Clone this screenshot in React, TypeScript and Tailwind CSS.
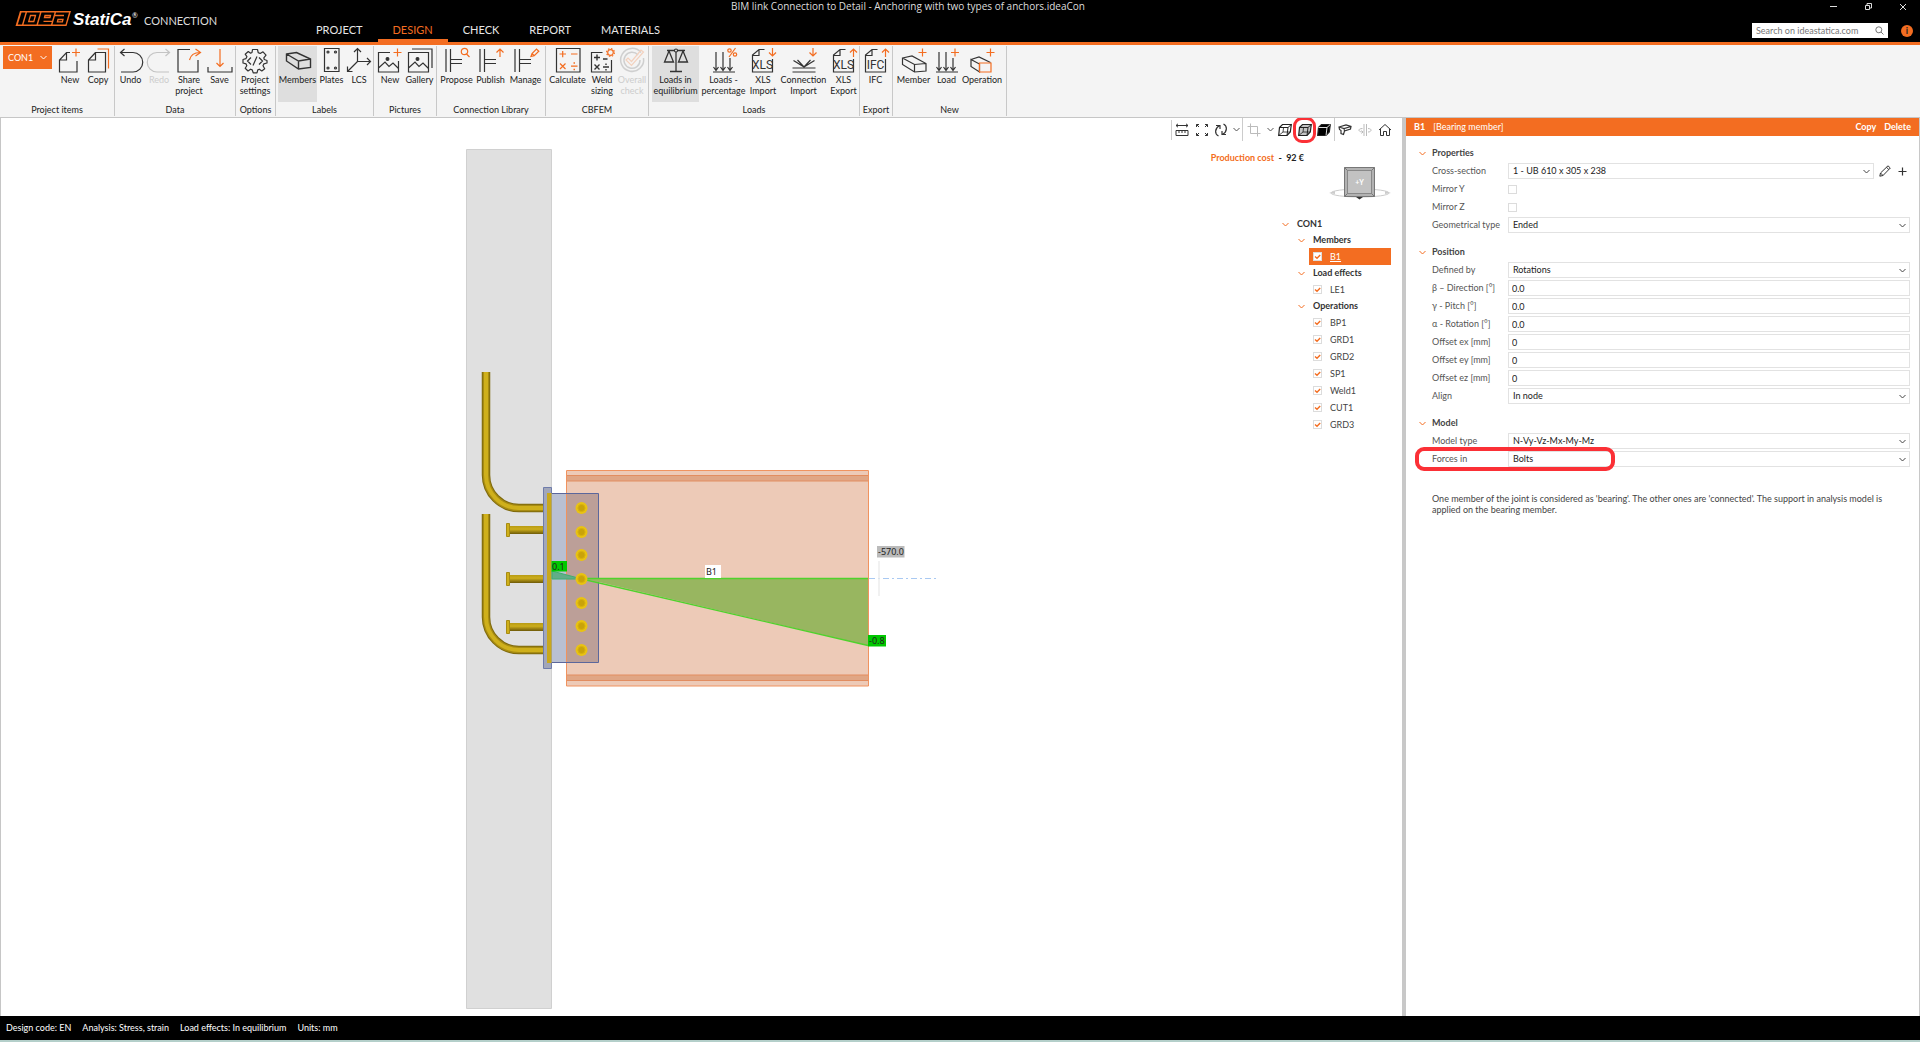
import type { ReactNode } from "react";

const ORANGE = "#f36d21";

type IconProps = { children: ReactNode; muted?: boolean };

const RibbonIcon = ({ children, muted }: IconProps) => (
  <svg
    width="26"
    height="26"
    viewBox="0 0 26 26"
    fill="none"
    stroke="#333"
    strokeWidth="1.2"
    className={muted ? "overflow-visible opacity-25" : "overflow-visible"}
    aria-hidden="true"
  >
    {children}
  </svg>
);

const Plus = ({ x, y }: { x: number; y: number }) => (
  <path d={`M${x} ${y - 4}v8M${x - 4} ${y}h8`} stroke={ORANGE} />
);

const SheetIcon = ({ text, up }: { text: string; up?: boolean }) => (
  <RibbonIcon>
    <path d="M14.5 1.5H9L2.5 7V24H22.5V11M2.5 7.5H9V1.5" />
    <text
      x="12.5"
      y="20.5"
      fontSize="12"
      textAnchor="middle"
      fill="#333"
      stroke="none"
      className="font-['Roboto',sans-serif]"
    >
      {text}
    </text>
    {up ? (
      <path d="M22.5 9V1M19 4.5L22.5 1L26 4.5" stroke={ORANGE} />
    ) : (
      <path d="M22.5 0V8M19 4.5L22.5 8L26 4.5" stroke={ORANGE} />
    )}
  </RibbonIcon>
);

const Joint = ({ children }: { children: ReactNode }) => (
  <RibbonIcon>
    <path d="M2 1V24M6.5 1V24M6.5 11.5H18M6.5 15.5H18" />
    {children}
  </RibbonIcon>
);

const LoadArrows = () => (
  <path d="M2 24H24M5 4V22M2.5 19L5 22.5L7.5 19M12 4V22M9.5 19L12 22.5L14.5 19M19 10V22M16.5 19L19 22.5L21.5 19" />
);

const icons: Record<string, ReactNode> = {
  new: (
    <RibbonIcon>
      <path d="M13 4.5H9.5L2.5 12V24H20V13M2.5 12H9.5V4.5" />
      <Plus x={19} y={4.5} />
    </RibbonIcon>
  ),
  copy: (
    <RibbonIcon>
      <path d="M10.5 4.5L3.5 12V24H20.5V4.5ZM3.5 12H10.5V4.5" />
      <path d="M12.5 1H23.5V20.5" stroke={ORANGE} />
    </RibbonIcon>
  ),
  undo: (
    <RibbonIcon>
      <path d="M2.5 4.5H15A9.7 9.7 0 0 1 15 24H3M6.5 1L2.5 4.5L6.5 8" />
    </RibbonIcon>
  ),
  redo: (
    <RibbonIcon muted>
      <path d="M23.5 4.5H11A9.7 9.7 0 0 0 11 24H23M19.5 1L23.5 4.5L19.5 8" />
    </RibbonIcon>
  ),
  share: (
    <RibbonIcon>
      <path d="M14 1.5H2V24H22V12" />
      <path d="M13.5 12C14.5 7.5 18 4.5 24 4.5M19.5 1L24.5 4.5L19.5 8" stroke={ORANGE} />
    </RibbonIcon>
  ),
  save: (
    <RibbonIcon>
      <path d="M1 19V24H25V19" />
      <path d="M13 1V18.5M9.5 15L13 18.5L16.5 15" stroke={ORANGE} />
    </RibbonIcon>
  ),
  settings: (
    <RibbonIcon>
      <path
        strokeLinejoin="round"
        d="M10.5 1.5H15.5L16.2 4.6L18.2 5.5L21 3.8L24 7.2L21.8 9.8L22.3 11.5L25 12.5V15L21.9 15.8L21 17.8L22.7 20.7L19.8 23L17.3 21.2L15.8 21.9L15 24.8H11.2L10.2 21.9L8.6 21.2L6 23L3.2 20.3L4.8 17.8L4 15.8L1 15V11.5L4 10.6L4.9 8.7L3.2 6.2L6.3 3.5L8.6 5.2L10 4.5Z"
      />
      <path d="M9 9.5L5.5 13L9 16.5M17 9.5L20.5 13L17 16.5M15 8.5L11 17.5" />
    </RibbonIcon>
  ),
  members: (
    <RibbonIcon>
      <path
        d="M1.5 6L11.5 4.5L25.5 11V19.5L13.5 21L1.5 13ZM1.5 6L13.5 13L25.5 11M13.5 13V21"
        strokeWidth="1.4"
      />
    </RibbonIcon>
  ),
  plates: (
    <RibbonIcon>
      <path d="M5.5 .5H20V23.5H5.5Z" />
      <circle cx="9" cy="4" r="1" />
      <circle cx="16.5" cy="4" r="1" />
      <circle cx="9" cy="20" r="1" />
      <circle cx="16.5" cy="20" r="1" />
    </RibbonIcon>
  ),
  lcs: (
    <RibbonIcon>
      <path d="M11.5 13.5V.5M8 4L11.5 .5L15 4M11.5 13.5H24.5M21 10L24.5 13.5L21 17M11.5 13.5L1.5 23.5M1.5 18.5V23.5H6.5" />
    </RibbonIcon>
  ),
  picture: (
    <RibbonIcon>
      <path d="M13 4.5H1.5V24H21.5V13M1.5 20L8 14L12 18.5L16 15L21.5 20.5" />
      <circle cx="10.5" cy="11" r="1.4" fill="#333" />
      <Plus x={20.5} y={4.5} />
    </RibbonIcon>
  ),
  gallery: (
    <RibbonIcon>
      <path d="M1.5 4.5H21.5V24H1.5ZM1.5 20L8 14L12 18.5L16 15L21.5 20.5M5 1H25V20" />
      <circle cx="10.5" cy="11" r="1.4" fill="#333" />
    </RibbonIcon>
  ),
  propose: (
    <Joint>
      <path d="M22.5 6L25.5 9" stroke={ORANGE} />
      <circle cx="20.5" cy="3.5" r="3.2" stroke={ORANGE} />
    </Joint>
  ),
  publish: (
    <Joint>
      <path d="M22 9V1M18.5 4.5L22 1L25.5 4.5" stroke={ORANGE} />
    </Joint>
  ),
  manage: (
    <Joint>
      <path d="M18 8.5L19 5.5L23.5 1L25.8 3.2L21.2 7.7ZM19 5.5L21.2 7.7" stroke={ORANGE} />
    </Joint>
  ),
  calculate: (
    <RibbonIcon>
      <path d="M1.5 .5H25V24H1.5Z" />
      <path
        d="M4.5 6H11M7.7 3V9.2M16 6H22.5M5 15.5L10.5 21M10.5 15.5L5 21M16 18.2H22.5"
        stroke={ORANGE}
      />
      <path d="M18.5 15H20M18.5 21.5H20" stroke={ORANGE} strokeWidth="1.5" />
    </RibbonIcon>
  ),
  weld: (
    <RibbonIcon>
      <path d="M13.5 4.5H2.5V24H22.5V12" />
      <path
        d="M5 9.5H11M8 6.5V12.5M14 11H18.5M5.5 16.5L10.5 21.5M10.5 16.5L5.5 21.5M14 19H20M17 15.5V17M17 21V22.5"
        strokeWidth="1.4"
      />
      <circle cx="21.5" cy="4.5" r="2.8" stroke={ORANGE} />
      <circle cx="21.5" cy="4.5" r="3.9" stroke={ORANGE} strokeDasharray="1.5 1.56" />
    </RibbonIcon>
  ),
  overall: (
    <RibbonIcon muted>
      <path d="M22 4.5A11.5 11.5 0 1 0 24.5 10M19 7A8 8 0 1 0 21 12" stroke="#666" strokeWidth="1.5" />
      <path d="M7 12L9 10L12.5 13.5L22 2L24.5 4L12.5 17.5Z" stroke={ORANGE} />
    </RibbonIcon>
  ),
  scales: (
    <RibbonIcon>
      <path d="M4 2.5H22M13 1V23.5M7 23.5H19M6 3L1.5 14H10.5ZM20 3L15.5 14H24.5Z" strokeWidth="1.3" />
      <circle cx="13" cy="2.5" r="1.5" fill="#f4f4f4" />
    </RibbonIcon>
  ),
  percentage: (
    <RibbonIcon>
      <LoadArrows />
      <circle cx="18.5" cy="2.5" r="1.7" stroke={ORANGE} />
      <circle cx="24" cy="6.5" r="1.7" stroke={ORANGE} />
      <path d="M24.5 0L18 9" stroke={ORANGE} />
    </RibbonIcon>
  ),
  xlsImport: <SheetIcon text="XLS" />,
  xlsExport: <SheetIcon text="XLS" up />,
  ifc: <SheetIcon text="IFC" up />,
  connection: (
    <RibbonIcon>
      <path d="M1.5 20H24.5M1.5 24H24.5M13 19L2.5 12.5M13 19L23.5 12.5M13 19L6.5 12M13 19L19.5 12" />
      <path d="M22 0V8M18.5 4.5L22 8L25.5 4.5" stroke={ORANGE} />
    </RibbonIcon>
  ),
  member: (
    <RibbonIcon>
      <path d="M1.5 10L11 8L25 15.5V23L13.5 24L1.5 16.5ZM1.5 10L13.5 16.5L25 15.5M13.5 16.5V24" />
      <Plus x={21.5} y={4.5} />
    </RibbonIcon>
  ),
  load: (
    <RibbonIcon>
      <LoadArrows />
      <Plus x={21} y={4.5} />
    </RibbonIcon>
  ),
  operation: (
    <RibbonIcon>
      <path d="M2 11.5L10 9L21.5 14.5M2 11.5L10.5 16V24L2 18.5Z" />
      <path d="M10.5 15H22V24H10.5Z" stroke={ORANGE} />
      <Plus x={21.5} y={4.5} />
    </RibbonIcon>
  ),
};

type Tool = { icon: string; label: string; width: string; active?: boolean; disabled?: boolean };
type Group = { name: string; width: string; pad?: string; tools: Tool[] };

const groups: Group[] = [
  {
    name: "Project items",
    width: "w-[115px]",
    pad: "pl-[3px]",
    tools: [
      { icon: "new", label: "New", width: "w-[28px]" },
      { icon: "copy", label: "Copy", width: "w-[28px]" },
    ],
  },
  {
    name: "Data",
    width: "w-[121px]",
    pad: "pl-px",
    tools: [
      { icon: "undo", label: "Undo", width: "w-[29px]" },
      { icon: "redo", label: "Redo", width: "w-[28px]", disabled: true },
      { icon: "share", label: "Share project", width: "w-[32px]" },
      { icon: "save", label: "Save", width: "w-[29px]" },
    ],
  },
  {
    name: "Options",
    width: "w-[40px]",
    tools: [{ icon: "settings", label: "Project settings", width: "w-[38px]" }],
  },
  {
    name: "Labels",
    width: "w-[98px]",
    pad: "pl-[2px]",
    tools: [
      { icon: "members", label: "Members", width: "w-[39px]", active: true },
      { icon: "plates", label: "Plates", width: "w-[29px]" },
      { icon: "lcs", label: "LCS", width: "w-[26px]" },
    ],
  },
  {
    name: "Pictures",
    width: "w-[63px]",
    pad: "pl-[2px]",
    tools: [
      { icon: "picture", label: "New", width: "w-[28px]" },
      { icon: "gallery", label: "Gallery", width: "w-[31px]" },
    ],
  },
  {
    name: "Connection Library",
    width: "w-[109px]",
    pad: "pl-[2px]",
    tools: [
      { icon: "propose", label: "Propose", width: "w-[35px]" },
      { icon: "publish", label: "Publish", width: "w-[33px]" },
      { icon: "manage", label: "Manage", width: "w-[37px]" },
    ],
  },
  {
    name: "CBFEM",
    width: "w-[103px]",
    pad: "pl-[2px]",
    tools: [
      { icon: "calculate", label: "Calculate", width: "w-[39px]" },
      { icon: "weld", label: "Weld sizing", width: "w-[30px]" },
      { icon: "overall", label: "Overall check", width: "w-[30px]", disabled: true },
    ],
  },
  {
    name: "Loads",
    width: "w-[211px]",
    pad: "pl-[3px]",
    tools: [
      { icon: "scales", label: "Loads in equilibrium", width: "w-[47px]", active: true },
      { icon: "percentage", label: "Loads - percentage", width: "w-[49px]" },
      { icon: "xlsImport", label: "XLS Import", width: "w-[30px]" },
      { icon: "connection", label: "Connection Import", width: "w-[51px]" },
      { icon: "xlsExport", label: "XLS Export", width: "w-[29px]" },
    ],
  },
  {
    name: "Export",
    width: "w-[33px]",
    tools: [{ icon: "ifc", label: "IFC", width: "w-[31px]" }],
  },
  {
    name: "New",
    width: "w-[114px]",
    pad: "pl-[2px]",
    tools: [
      { icon: "member", label: "Member", width: "w-[37px]" },
      { icon: "load", label: "Load", width: "w-[29px]" },
      { icon: "operation", label: "Operation", width: "w-[42px]" },
    ],
  },
];

const Chevron = ({ className }: { className?: string }) => (
  <svg width="7" height="5" viewBox="0 0 7 5" fill="none" stroke="currentColor" className={className} aria-hidden="true">
    <path d="M.5 1L3.5 4L6.5 1" />
  </svg>
);

const Logo = () => (
  <svg width="126" height="18" viewBox="0 0 126 18" role="img" aria-label="IDEA StatiCa" className="overflow-visible">
    <path d="M5 1H56L51.5 16H.5Z" fill={ORANGE} />
    <path d="M6.5 2.5H10.5L7 14.500H2.800Z" />
    <path d="M12 2.500H25L21.500 14.500H8.500ZM26.500 2.500H39.500L36 14.500H23ZM41 2.500H54L50.500 14.500H37.500Z" />
    <path
      d="M15.500 5.500H20.500L18.800 11.500H13.700ZM30 5.500H35.500L35 7.500H29.500ZM28.500 11.300H37M39.500 5.500H49M43 9.500H48L47.400 11.800H42.400Z"
      fill="none"
      stroke={ORANGE}
      strokeWidth="1.3"
    />
    <text
      x="58"
      y="15"
      fontSize="17"
      fontWeight="bold"
      fontStyle="italic"
      fill="#fff"
      className="font-['Liberation_Sans',sans-serif]"
    >
      StatiCa
    </text>
    <text x="117" y="8" fontSize="7" fill="#fff">
      ®
    </text>
  </svg>
);

const tabs = ["PROJECT", "DESIGN", "CHECK", "REPORT", "MATERIALS"];

const Header = () => (
  <header className="flex h-[45px] shrink-0 border-b-[3px] border-[#f36d21] bg-black text-white">
    <div className="flex w-[292px] items-start pt-[10px] pl-[15px]">
      <Logo />
      <span className="ml-[3px] pt-[4px] text-[11px] leading-[14px] text-[#ddd]">CONNECTION</span>
    </div>
    <div className="flex flex-1 flex-col justify-between">
      <h1 className="text-center font-['Open_Sans','Noto_Sans',sans-serif] text-[10px] leading-[13px] text-[#ddd]">
        BIM link Connection to Detail - Anchoring with two types of anchors.ideaCon
      </h1>
      <nav className="flex pl-[9px]">
        {tabs.map((tab) => (
          <button
            key={tab}
            type="button"
            className={
              tab === "DESIGN"
                ? "h-[22px] border-b-[3px] border-[#f36d21] px-[15px] text-[11px] leading-[19px] text-[#f36d21]"
                : "h-[22px] border-b-[3px] border-transparent px-[15px] text-[11px] leading-[19px] text-[#e6e6e6]"
            }
          >
            {tab}
          </button>
        ))}
      </nav>
    </div>
    <div className="flex w-[396px] flex-col justify-between pb-[4px]">
      <div className="flex justify-end pr-[12px]">
        <button type="button" aria-label="Minimize" className="flex h-[13px] w-[35px] items-center justify-end">
          <svg width="11" height="11" viewBox="0 0 11 11" stroke="#ddd" fill="none">
            <path d="M3 5.5H10" />
          </svg>
        </button>
        <button type="button" aria-label="Restore" className="flex h-[13px] w-[35px] items-center justify-end">
          <svg width="11" height="11" viewBox="0 0 11 11" stroke="#ddd" fill="none">
            <path d="M3.5 4.5H7.5V8.5H3.5ZM5 4V2.5H9.5V7H8" />
          </svg>
        </button>
        <button type="button" aria-label="Close" className="flex h-[13px] w-[35px] items-center justify-end">
          <svg width="11" height="11" viewBox="0 0 11 11" stroke="#ddd" fill="none">
            <path d="M3 3L9 9M9 3L3 9" />
          </svg>
        </button>
      </div>
      <div className="flex items-center justify-end gap-[13px] pr-[7px]">
        <label className="flex h-[15px] w-[136px] items-center bg-white px-[4px]">
          <input
            type="search"
            aria-label="Search"
            placeholder="Search on ideastatica.com"
            className="w-full min-w-0 text-[9px] leading-[13px] text-black outline-none placeholder:text-[#777]"
          />
          <svg width="9" height="9" viewBox="0 0 9 9" fill="none" stroke="#777" className="shrink-0">
            <circle cx="3.8" cy="3.8" r="3" />
            <path d="M6 6L8.5 8.5" />
          </svg>
        </label>
        <button
          type="button"
          aria-label="Information"
          className="flex size-[12px] items-center justify-center rounded-full bg-[#f36d21] text-[9px] leading-[12px] font-bold text-[#222]"
        >
          i
        </button>
      </div>
    </div>
  </header>
);

const Ribbon = () => (
  <div className="flex h-[73px] shrink-0 border-b border-[#c6c6c6] bg-[#f4f4f4] pt-px pb-px text-[#222]">
    {groups.map((group, i) => (
      <section
        key={i}
        className={`${group.width} flex shrink-0 flex-col justify-between border-r border-[#c8c8c8]`}
      >
        <div className={`flex ${group.pad ?? ""}`}>
          {i === 0 && (
            <button
              type="button"
              className="mr-1 flex h-[23px] w-[49px] shrink-0 items-center justify-between bg-[#f36d21] px-[5px] text-[9px] text-white"
            >
              CON1
              <Chevron />
            </button>
          )}
          {group.tools.map((tool) => (
            <button
              key={tool.label}
              type="button"
              disabled={tool.disabled}
              className={`${tool.width} ${tool.active ? "bg-[#dedede]" : ""} flex h-[56px] shrink-0 flex-col items-center pt-[2px]`}
            >
              {icons[tool.icon]}
              <span
                className={
                  tool.disabled
                    ? "text-center text-[9px] leading-[11px] text-[#ccc]"
                    : "text-center text-[9px] leading-[11px]"
                }
              >
                {tool.label}
              </span>
            </button>
          ))}
        </div>
        <h2 className="text-center text-[9px] leading-[12px] whitespace-nowrap">{group.name}</h2>
      </section>
    ))}
  </div>
);

const bolts = [359, 383, 406, 430, 454, 477, 501];
const studs = [381, 430, 478];

/* Side view of the joint: concrete block, anchors, plates, beam and its bending diagram */
const JointDrawing = () => (
  <svg
    width="472"
    height="860"
    viewBox="0 0 472 860"
    fill="none"
    className="absolute inset-x-0 top-[31px] mx-auto overflow-visible"
  >
    <defs>
      <linearGradient id="rod" x1="0" y1="0" x2="0" y2="1">
        <stop offset="0" stopColor="#b89b14" />
        <stop offset=".4" stopColor="#cdae1c" />
        <stop offset="1" stopColor="#6e5a08" />
      </linearGradient>
    </defs>
    <path d="M.5 .5H85.5V859.5H.5Z" fill="#e0e0e0" stroke="#d0d0d0" />

    {["M20 223V326A33 33 0 0 0 53 359H78", "M20 365V468A33 33 0 0 0 53 501H78"].map((d) => (
      <g key={d}>
        <path d={d} stroke="#7d680c" strokeWidth="8.5" />
        <path d={d} stroke="#a88c12" strokeWidth="6.5" />
        <path d={d} stroke="#cfb01b" strokeWidth="4" />
      </g>
    ))}
    {studs.map((y) => (
      <g key={y}>
        <path d={`M44 ${y - 4}h34v8h-34z`} fill="url(#rod)" />
        <path d={`M40.5 ${y - 6.5}h3v13h-3z`} fill="#cfb01b" stroke="#a88c12" />
      </g>
    ))}

    <path d="M77.5 338.5H85.5V519.5H77.5Z" fill="#a2a7b9" stroke="#6f7cab" />
    <path d="M85.5 344.5H132.5V513.5H85.5Z" fill="#b9c0d2" />
    <path d="M100.5 322H402.5V537H100.5Z" fill="#edcab7" />
    <path d="M100.5 326.5H402.5V332H100.5ZM100.5 526H402.5V531.5H100.5Z" fill="#e0a685" stroke="#e28d60" />
    <path d="M100.5 344.5H132.5V513.5H100.5Z" fill="#bc9f98" />
    <path d="M100.5 321.5H402.5V537H100.5Z" stroke="#f0935f" />
    <path d="M85.5 344.5H132.5V513.5H85.5" stroke="#5b679c" />
    <path d="M81 344H85.5V514H81Z" fill="#c9a81c" />

    <path d="M116 429L402 430V496.5Z" fill="#98b660" />
    <path d="M86 422L116 430H86Z" fill="#62ad88" stroke="#3fae6e" />
    <path d="M116 429.5H402M116 430L402 496.5" stroke="#4fd22c" strokeWidth="1.3" />
    <path d="M403 429.5H470" stroke="#a9c9f2" strokeDasharray="6 3 2 3" />
    <path d="M413 412V447" stroke="#ececec" strokeWidth="1.5" />

    {bolts.map((y) => (
      <g key={y}>
        <circle cx="115.5" cy={y} r="6" fill="#e9c312" />
        <circle cx="115.5" cy={y} r="3.6" fill="#c9a30a" stroke="#d9b20d" />
      </g>
    ))}

    <g className="font-['Noto_Sans',sans-serif]" fontSize="9" fill="#222">
      <path d="M85.5 412H101V422.5H85.5Z" fill="#00c800" />
      <text x="86" y="420.5">
        0.1
      </text>
      <path d="M402 486H420V497.5H402Z" fill="#00c800" />
      <text x="403" y="495">
        -0.8
      </text>
      <path d="M411 397H438.5V408.5H411Z" fill="#bbb" />
      <text x="412" y="406">
        -570.0
      </text>
      <path d="M239 416H255V429H239Z" fill="#fff" />
      <text x="240" y="426">
        B1
      </text>
    </g>
  </svg>
);

const Cube = ({ fill, solid }: { fill: string; solid?: boolean }) => (
  <svg width="14" height="14" viewBox="0 0 14 14" fill="none" stroke="#222" aria-hidden="true">
    <path d="M1.500 4.500L4.500 1.500H13.300L12.300 9L9 12.500H.700Z" fill={fill} strokeWidth="1.2" />
    <path d="M1.500 4.500H10L9 12.500M10 4.500L13.300 1.500" stroke={solid ? "#ddd" : "#222"} />
    {!solid && <path d="M.700 12.500L5 9H12M5 9L5.500 5" strokeWidth=".8" />}
  </svg>
);

const ViewIcon = ({ children, stroke = "#333" }: { children: ReactNode; stroke?: string }) => (
  <svg width="14" height="14" viewBox="0 0 14 14" fill="none" stroke={stroke} aria-hidden="true">
    {children}
  </svg>
);

const viewTools: { name: string; width: string; icon: ReactNode; ringed?: boolean }[] = [
  {
    name: "Measure",
    width: "w-[20px]",
    icon: (
      <ViewIcon>
        <path d="M1 2.5H13M3 .8L1 2.5L3 4.2M11 .8L13 2.5L11 4.2M1 7.5H13V12.5H1ZM4 7.5V10M7 7.5V10M10 7.5V10" />
      </ViewIcon>
    ),
  },
  {
    name: "Zoom to fit",
    width: "w-[20px]",
    icon: (
      <ViewIcon>
        <path d="M1.5 4V1.500H4M1.500 1.500L4 4M10 1.500H12.500V4M12.500 1.500L10 4M12.500 10V12.500H10M12.500 12.500L10 10M4 12.500H1.500V10M1.500 12.500L4 10" />
      </ViewIcon>
    ),
  },
  {
    name: "Rotate",
    width: "w-[18px]",
    icon: (
      <ViewIcon>
        <path
          d="M4.500 13C.5 11 .5 5.500 5.500 2.500M2 2.500H6V6M9.500 1C13.500 3 13.500 8.500 8.500 11.500M12 11.500H8V8"
          strokeWidth="1.2"
        />
      </ViewIcon>
    ),
  },
  { name: "Rotate options", width: "w-[12px]", icon: <Chevron /> },
  { name: "|", width: "", icon: null },
  {
    name: "Clip",
    width: "w-[22px]",
    icon: (
      <ViewIcon stroke="#bbb">
        <path d="M3.5 .5V10.5H13.5M.5 3.5H10.5V13.5" />
      </ViewIcon>
    ),
  },
  { name: "Clip options", width: "w-[10px]", icon: <Chevron /> },
  { name: "Wireframe", width: "w-[20px]", icon: <Cube fill="none" /> },
  { name: "Transparent", width: "w-[19px]", icon: <Cube fill="#c4c4c4" />, ringed: true },
  { name: "Solid", width: "w-[20px]", icon: <Cube fill="#000" solid /> },
  { name: "|", width: "", icon: null },
  {
    name: "Member view",
    width: "w-[20px]",
    icon: (
      <ViewIcon>
        <path
          d="M1 4L8 2L13 3.500L12.500 6L6.500 8L5.500 11.500L3 10.500V7.500L1.500 6.500ZM1 4L6 5.500L13 3.500M6 5.500L6.500 8"
          strokeWidth="1.2"
        />
      </ViewIcon>
    ),
  },
  {
    name: "Mirror",
    width: "w-[20px]",
    icon: (
      <ViewIcon stroke="#bbb">
        <path d="M6 1V13M8.5 1V13M4.500 5.500C2 5.500 .5 6.500 1 7.500C1.500 8.500 3 9 5 9M3.500 7.500L5 9L3.500 10.500M10 5.500C12 5.500 13.500 6.500 13 7.500C12.500 8.500 11.500 9 10 9" />
      </ViewIcon>
    ),
  },
  {
    name: "Home",
    width: "w-[20px]",
    icon: (
      <ViewIcon>
        <path d="M1 7L7 1.5L13 7M2.500 6V12.5H5.5V8.5H8.5V12.5H11.500V6" />
      </ViewIcon>
    ),
  },
];

const ViewToolbar = () => (
  <div className="flex h-[23px] items-center justify-end pr-[7px]">
    <span className="h-[20px] w-px bg-[#ccc]" />
    {viewTools.map((tool, i) =>
      tool.name === "|" ? (
        <span key={i} className="h-[23px] w-px bg-[#ccc]" />
      ) : (
        <button
          key={i}
          type="button"
          aria-label={tool.name}
          className={`${tool.width} relative flex h-[20px] items-center justify-center text-[#555]`}
        >
          {tool.icon}
          {tool.ringed && (
            <span className="absolute -inset-x-[2px] -inset-y-[3px] rounded-[9px] border-[3px] border-[#fb3036]" />
          )}
        </button>
      ),
    )}
  </div>
);

const NavigationCube = () => (
  <svg width="62" height="34" viewBox="0 0 62 34" fill="none" className="self-end">
    <ellipse cx="31" cy="27" rx="29" ry="4" stroke="#ccc" />
    <path d="M0 27L6 25V28ZM62 27L56 25V28Z" fill="#ccc" />
    <path d="M15.5 1.5H45.5V30.5H15.5Z" fill="#b2b2b2" stroke="#777" />
    <path d="M18.5 4.5H42.5V27.5H18.5Z" fill="#c2c2c2" stroke="#888" />
    <path
      d="M15.5 1.5L18.5 4.5M45.5 1.5L42.5 4.5M15.5 30.5L18.5 27.5M45.5 30.5L42.5 27.5"
      stroke="#777"
    />
    <path d="M27 31H34L30.5 33.5Z" fill="#333" />
    <text x="30.5" y="19" fontSize="7" fontWeight="bold" textAnchor="middle" fill="#fff">
      +Y
    </text>
  </svg>
);

const tree = [
  { name: "Members", items: ["B1"] },
  { name: "Load effects", items: ["LE1"] },
  { name: "Operations", items: ["BP1", "GRD1", "GRD2", "SP1", "Weld1", "CUT1", "GRD3"] },
];

const CheckBox = ({ id, checked }: { id: string; checked?: boolean }) => (
  <span className="relative flex size-[9px]">
    <input
      id={id}
      type="checkbox"
      defaultChecked={checked}
      className="peer size-[9px] appearance-none border border-[#dcdcdc] bg-white"
    />
    <svg
      viewBox="0 0 9 9"
      fill="none"
      stroke={ORANGE}
      strokeWidth="1.4"
      className="pointer-events-none absolute inset-0 hidden peer-checked:block"
    >
      <path d="M2 4.5L4 6.3L7.2 3" />
    </svg>
  </span>
);

const Tree = () => (
  <div className="mt-4 w-[118px] text-[9px] text-[#444]">
    <h3 className="flex h-[16px] items-center gap-[8px] pl-[9px] font-bold text-[#333]">
      <Chevron className="text-[#f36d21]" />
      CON1
    </h3>
    {tree.map((branch) => (
      <div key={branch.name} className="pl-[25px]">
        <h4 className="flex h-[16px] items-center gap-[8px] font-bold text-[#333]">
          <Chevron className="text-[#f36d21]" />
          {branch.name}
        </h4>
        <ul className="pl-[11px]">
          {branch.items.map((item) => (
            <li
              key={item}
              className={
                item === "B1"
                  ? "flex h-[17px] items-center gap-[8px] bg-[#f36d21] pl-[4px] text-white underline"
                  : "flex h-[17px] items-center gap-[8px] pl-[4px]"
              }
            >
              <CheckBox id={`tree-${item}`} checked />
              <label htmlFor={`tree-${item}`}>{item}</label>
            </li>
          ))}
        </ul>
      </div>
    ))}
  </div>
);

const Viewer = () => (
  <main className="relative min-w-0 flex-1 overflow-hidden border-l border-[#c6c6c6] bg-white">
    <JointDrawing />
    <div className="relative">
      <ViewToolbar />
      <div className="flex flex-col items-end pr-[11px]">
        <p className="mt-[9px] pr-[87px] text-[9px] leading-[16px] font-bold text-[#222]">
          <span className="text-[#f36d21]">Production cost</span> &nbsp;-&nbsp; 92 €
        </p>
        <NavigationCube />
        <Tree />
      </div>
    </div>
  </main>
);

type Field = {
  label: string;
  value?: string;
  kind: "select" | "text" | "check";
  editable?: boolean;
  ringed?: boolean;
};

const sections: { title: string; fields: Field[] }[] = [
  {
    title: "Properties",
    fields: [
      { label: "Cross-section", value: "1 - UB 610 x 305 x 238", kind: "select", editable: true },
      { label: "Mirror Y", kind: "check" },
      { label: "Mirror Z", kind: "check" },
      { label: "Geometrical type", value: "Ended", kind: "select" },
    ],
  },
  {
    title: "Position",
    fields: [
      { label: "Defined by", value: "Rotations", kind: "select" },
      { label: "β – Direction [°]", value: "0.0", kind: "text" },
      { label: "γ - Pitch [°]", value: "0.0", kind: "text" },
      { label: "α - Rotation [°]", value: "0.0", kind: "text" },
      { label: "Offset ex [mm]", value: "0", kind: "text" },
      { label: "Offset ey [mm]", value: "0", kind: "text" },
      { label: "Offset ez [mm]", value: "0", kind: "text" },
      { label: "Align", value: "In node", kind: "select" },
    ],
  },
  {
    title: "Model",
    fields: [
      { label: "Model type", value: "N-Vy-Vz-Mx-My-Mz", kind: "select" },
      { label: "Forces in", value: "Bolts", kind: "select", ringed: true },
    ],
  },
];

const FieldRow = ({ field }: { field: Field }) => {
  const id = field.label.replace(/[^A-Za-z]+/g, "-").toLowerCase();
  return (
    <div className="relative grid h-[18px] grid-cols-[76px_minmax(0,1fr)] items-center">
      <label htmlFor={id} className="whitespace-nowrap text-[#555]">
        {field.label}
      </label>
      <div className="flex items-center">
        {field.kind === "select" && (
          <div className="relative flex flex-1 items-center">
            <select
              id={id}
              className="h-[16px] w-full appearance-none border border-[#e2e2e2] bg-white px-[4px] text-[#222] outline-none"
            >
              <option>{field.value}</option>
            </select>
            <Chevron className="pointer-events-none absolute right-[4px] text-[#444]" />
          </div>
        )}
        {field.kind === "text" && (
          <input
            id={id}
            type="text"
            defaultValue={field.value}
            className="h-[16px] w-full border border-[#e2e2e2] bg-white px-[3px] text-[#222] outline-none"
          />
        )}
        {field.kind === "check" && <CheckBox id={id} />}
        {field.editable && (
          <div className="flex w-[36px] items-center justify-between pr-[3px] pl-[5px] text-[#333]">
            <button type="button" aria-label="Edit cross-section">
              <svg width="12" height="12" viewBox="0 0 12 12" fill="none" stroke="currentColor">
                <path d="M.8 11.2L1.5 8L9 .8L11.3 3L4 10.5ZM1.5 8L4 10.5M7.5 2.3L9.8 4.5" />
              </svg>
            </button>
            <button type="button" aria-label="Add cross-section">
              <svg width="9" height="9" viewBox="0 0 9 9" fill="none" stroke="currentColor">
                <path d="M4.5 .5V8.5M.5 4.5H8.5" strokeWidth="1.2" />
              </svg>
            </button>
          </div>
        )}
      </div>
      {field.ringed && (
        <span className="pointer-events-none absolute -top-[3px] -left-[17px] h-[24px] w-[200px] rounded-[9px] border-[4px] border-[#fb3036]" />
      )}
    </div>
  );
};

const PropertiesPanel = () => (
  <aside className="w-[518px] shrink-0 border-r border-l-[4px] border-[#c8c8c8] bg-white text-[9px]">
    <div className="flex h-[18px] items-center bg-[#f36d21] px-2 text-white">
      <strong>B1</strong>
      <span className="ml-[8px]">[Bearing member]</span>
      <button type="button" className="ml-auto font-bold">
        Copy
      </button>
      <button type="button" className="ml-[8px] font-bold">
        Delete
      </button>
    </div>
    <div className="flex flex-col gap-[9px] pt-[8px] pr-[9px] pl-[26px]">
      {sections.map((section) => (
        <section key={section.title}>
          <h3 className="-ml-[13px] flex h-[18px] items-center gap-[6px] font-bold text-[#444]">
            <Chevron className="text-[#f36d21]" />
            {section.title}
          </h3>
          {section.fields.map((field) => (
            <FieldRow key={field.label} field={field} />
          ))}
        </section>
      ))}
      <p className="mt-4 max-w-[470px] leading-[11px] text-[#444]">
        One member of the joint is considered as 'bearing'. The other ones are 'connected'. The support in
        analysis model is applied on the bearing member.
      </p>
    </div>
  </aside>
);

const StatusBar = () => (
  <footer className="flex h-[26px] shrink-0 items-center gap-[11px] border-b-2 border-[#b4cfca] bg-black px-[6px] text-[9px] text-white">
    <span>Design code: EN</span>
    <span>Analysis: Stress, strain</span>
    <span>Load effects: In equilibrium</span>
    <span>Units: mm</span>
  </footer>
);

export default function App() {
  return (
    <div className="flex h-screen flex-col overflow-hidden bg-white font-['Lato','Noto_Sans',sans-serif]">
      <Header />
      <Ribbon />
      <div className="flex min-h-0 flex-1">
        <Viewer />
        <PropertiesPanel />
      </div>
      <StatusBar />
    </div>
  );
}
